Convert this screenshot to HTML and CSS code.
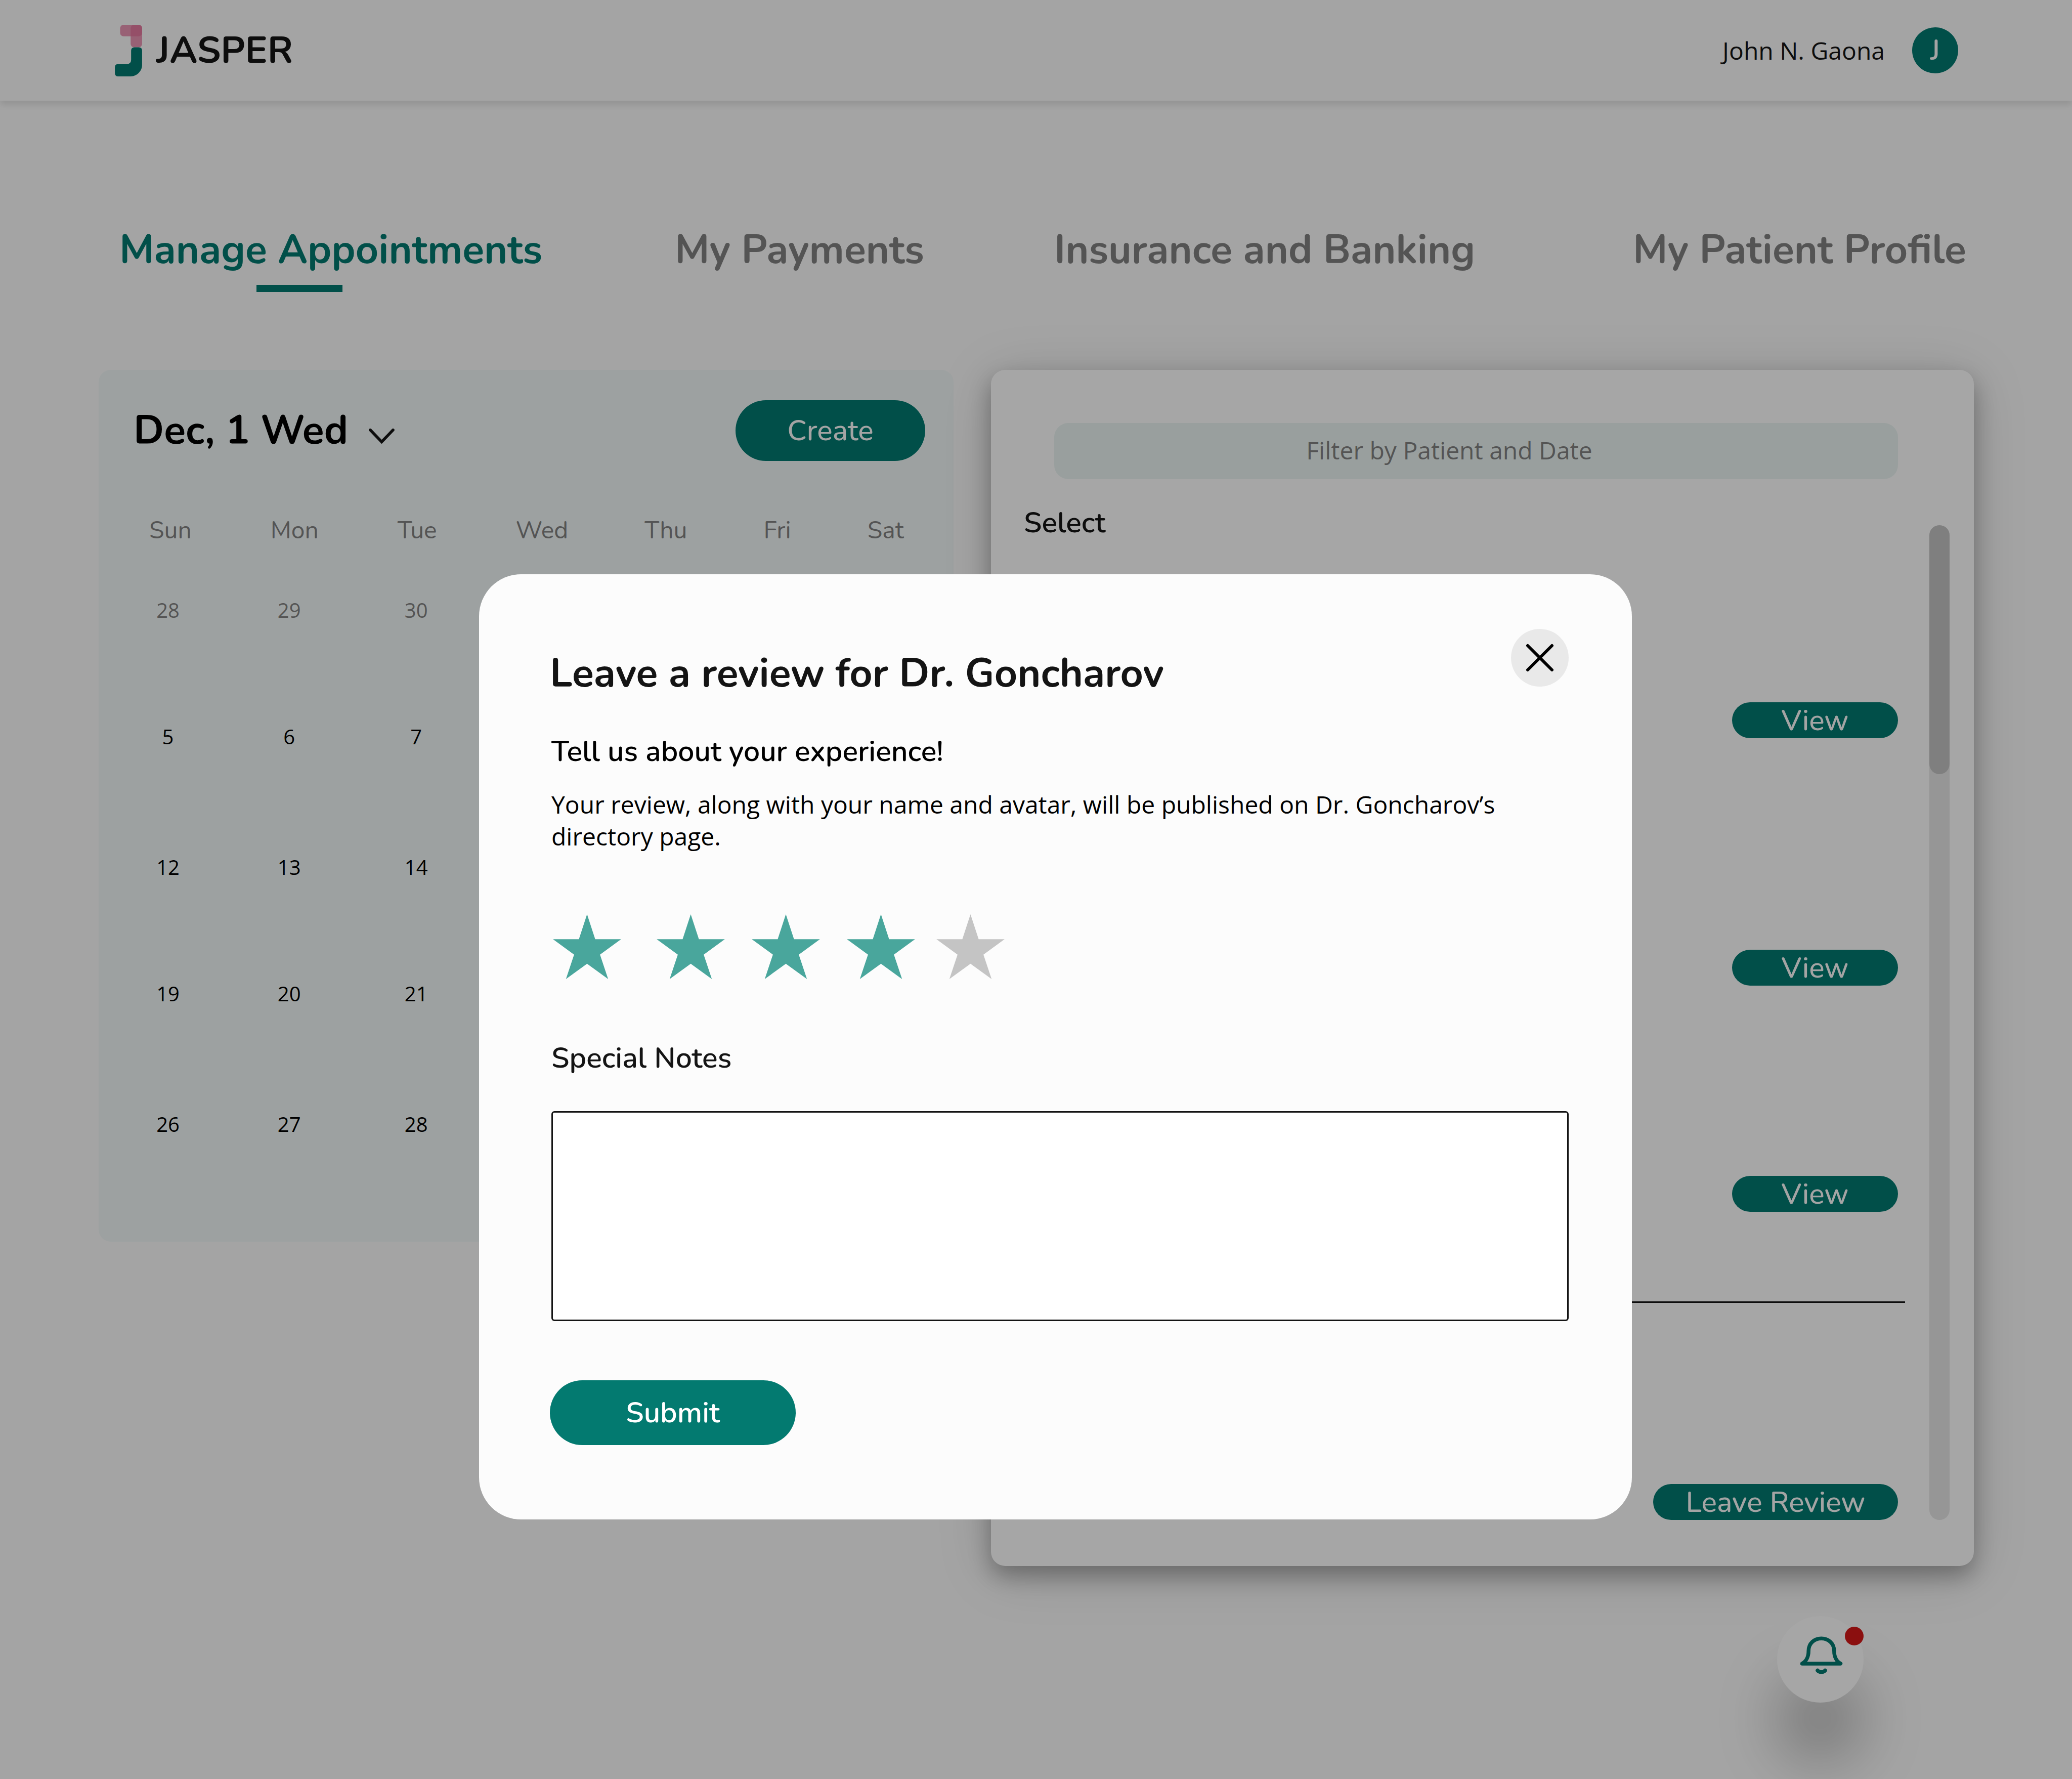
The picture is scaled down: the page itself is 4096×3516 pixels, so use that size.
FILE: index.html
```html
<!DOCTYPE html>
<html lang="en">
<head>
<meta charset="utf-8">
<title>Jasper – Manage Appointments</title>
<link rel="stylesheet" href="styles.css">
</head>
<body>
<div class="page">
  <header class="topbar">
    <a class="brand" href="#">
      <svg class="brand-mark" viewBox="0 0 57 108" aria-hidden="true">
        <rect x="11" y="0" width="46" height="24" rx="7" fill="#e36f98" fill-opacity=".72"/>
        <rect x="33" y="0" width="24" height="47" rx="7" fill="#e36f98" fill-opacity=".72"/>
        <path fill="#037a70" d="M41 47h9q7 0 7 7v30c0 13-11 24-24 24H7q-7 0-7-7V89q0-7 7-7h18q9 0 9-9V54q0-7 7-7z"/>
      </svg>
      <span class="brand-name">JASPER</span>
    </a>
    <div class="account">
      <span class="account-name">John N. Gaona</span>
      <span class="avatar">J</span>
    </div>
  </header>

  <nav class="tabs">
    <a class="tab tab-active" href="#">Manage Appointments</a>
    <a class="tab" href="#">My Payments</a>
    <a class="tab" href="#">Insurance and Banking</a>
    <a class="tab" href="#">My Patient Profile</a>
  </nav>

  <main class="panels">
    <section class="calendar">
      <div class="calendar-head">
        <h2 class="calendar-date">Dec, 1 Wed
          <svg class="chevron" viewBox="0 0 54 32" aria-hidden="true"><path d="M3 3l24 25L51 3"/></svg>
        </h2>
        <button class="btn btn-create" type="button">Create</button>
      </div>
      <table class="month">
        <thead>
          <tr><th>Sun</th><th>Mon</th><th>Tue</th><th>Wed</th><th>Thu</th><th>Fri</th><th>Sat</th></tr>
        </thead>
        <tbody>
          <tr><td class="out"><span>28</span></td><td class="out"><span>29</span></td><td class="out"><span>30</span></td><td></td><td></td><td></td><td></td></tr>
          <tr><td><span>5</span></td><td><span>6</span></td><td><span>7</span></td><td></td><td></td><td></td><td></td></tr>
          <tr><td><span>12</span></td><td><span>13</span></td><td><span>14</span></td><td></td><td></td><td></td><td></td></tr>
          <tr><td><span>19</span></td><td><span>20</span></td><td><span>21</span></td><td></td><td></td><td></td><td></td></tr>
          <tr><td><span>26</span></td><td><span>27</span></td><td><span>28</span></td><td></td><td></td><td></td><td></td></tr>
        </tbody>
      </table>
    </section>

    <section class="visits">
      <input class="filter" type="text" aria-label="Filter by Patient and Date" placeholder="Filter by Patient and Date">
      <div class="visits-body">
        <div class="visits-main">
          <h3 class="select">Select</h3>
          <ul class="visit-list">
            <li class="visit"><button class="btn btn-row" type="button">View</button></li>
            <li class="visit"><button class="btn btn-row" type="button">View</button></li>
            <li class="visit visit-last"><button class="btn btn-row" type="button">View</button></li>
            <li class="visit"><button class="btn btn-row btn-review" type="button">Leave Review</button></li>
          </ul>
        </div>
        <div class="scroll-track"><div class="scroll-thumb"></div></div>
      </div>
    </section>
  </main>

  <button class="alerts" type="button" aria-label="Notifications">
    <svg class="bell" viewBox="0 0 90 80" aria-hidden="true">
      <path d="M18 31C18 15 30 4.500 45 4.500S72 15 72 31C72 43 77 53 85.500 57.500H4.500C13 53 18 43 18 31z"/>
      <path d="M37 72c4 4.500 12 4.500 16 0"/>
    </svg>
    <span class="alerts-dot"></span>
  </button>
</div>

<div class="overlay">
  <form class="dialog" role="dialog" aria-labelledby="dialog-title">
    <div class="dialog-head">
      <h1 class="dialog-title" id="dialog-title">Leave a review for Dr. Goncharov</h1>
      <button class="close" type="button" aria-label="Close">
        <svg class="close-icon" viewBox="0 0 56 56" aria-hidden="true"><path d="M4 4l48 48M52 4L4 52"/></svg>
      </button>
    </div>
    <div class="fields">
      <h2 class="lead">Tell us about your experience!</h2>
      <p class="note">Your review, along with your name and avatar, will be published on Dr. Goncharov’s directory page.</p>
      <fieldset class="stars">
        <label class="star"><input type="radio" name="rating" value="1" aria-label="1 star"><svg viewBox="0 0 142 135" aria-hidden="true"><path d="M71 0l17 52h54L98 84l17 51-44-32-44 32 17-51L0 52h54z"/></svg></label>
        <label class="star"><input type="radio" name="rating" value="2" aria-label="2 stars"><svg viewBox="0 0 142 135" aria-hidden="true"><path d="M71 0l17 52h54L98 84l17 51-44-32-44 32 17-51L0 52h54z"/></svg></label>
        <label class="star"><input type="radio" name="rating" value="3" aria-label="3 stars"><svg viewBox="0 0 142 135" aria-hidden="true"><path d="M71 0l17 52h54L98 84l17 51-44-32-44 32 17-51L0 52h54z"/></svg></label>
        <label class="star"><input type="radio" name="rating" value="4" aria-label="4 stars" checked><svg viewBox="0 0 142 135" aria-hidden="true"><path d="M71 0l17 52h54L98 84l17 51-44-32-44 32 17-51L0 52h54z"/></svg></label>
        <label class="star star-off"><input type="radio" name="rating" value="5" aria-label="5 stars"><svg viewBox="0 0 142 135" aria-hidden="true"><path d="M71 0l17 52h54L98 84l17 51-44-32-44 32 17-51L0 52h54z"/></svg></label>
      </fieldset>
      <label class="notes-label" for="notes">Special Notes</label>
      <textarea class="notes" id="notes"></textarea>
    </div>
    <button class="btn btn-submit" type="submit">Submit</button>
  </form>
</div>
</body>
</html>
```
FILE: styles.css
```css
:root {
  --display: "Nunito", "Lato", sans-serif;
  --text: "Open Sans", "Noto Sans", sans-serif;
  --teal: #037a70;
  --ink: #141414;
  --muted: #828282;
}

* {
  box-sizing: border-box;
}

body,
h1,
h2,
h3,
p,
ul,
fieldset {
  margin: 0;
  padding: 0;
}

body {
  background: #fcfcfc;
  color: var(--ink);
  font-family: var(--display);
}

a {
  color: inherit;
  text-decoration: none;
}

.page {
  position: relative;
  min-height: 100vh;
  overflow: hidden;
}

/* Header */
.topbar {
  display: flex;
  justify-content: space-between;
  align-items: center;
  height: 199px;
  padding: 0 225px 0 227px;
  background: #fcfcfc;
  box-shadow: 0 8px 12px rgba(0, 0, 0, 0.1);
}

.brand,
.account {
  display: flex;
  align-items: center;
}

.brand {
  gap: 28px;
}

.brand-mark {
  width: 54px;
  height: 102px;
}

.brand-name {
  font-size: 74px;
  font-weight: 700;
  line-height: 104px;
}

.account {
  gap: 54px;
}

.account-name {
  font-family: var(--text);
  font-size: 48px;
  line-height: 66px;
}

.avatar {
  width: 91px;
  height: 91px;
  border-radius: 50%;
  background: var(--teal);
  color: #fcfcfc;
  font-size: 57px;
  font-weight: 600;
  line-height: 91px;
  text-align: center;
}

/* Section tabs */
.tabs {
  display: grid;
  grid-template-columns: 1098fr 750fr 1144fr 670fr;
  padding: 240px 198px 0 236px;
}

.tab {
  color: var(--muted);
  font-size: 79px;
  font-weight: 700;
  line-height: 110px;
  white-space: nowrap;
}

.tab-active {
  color: var(--teal);
}

.tab-active::after {
  content: "";
  display: block;
  width: 170px;
  height: 14px;
  margin: 14px 0 0 271px;
  background: var(--teal);
}

.panels {
  display: grid;
  grid-template-columns: 1690fr 1943fr;
  align-items: start;
  gap: 74px;
  padding: 154px 194px 0 195px;
}

.btn {
  border: 0;
  border-radius: 64px;
  background: var(--teal);
  color: #fcfcfc;
  font-family: var(--display);
  font-size: 57px;
  font-weight: 500;
  line-height: 70px;
}

/* Calendar */
.calendar {
  height: 1723px;
  padding: 60px 56px 0 69px;
  border-radius: 24px;
  background: #f2f8f8;
}

.calendar-head {
  display: flex;
  justify-content: space-between;
  align-items: center;
}

.calendar-date {
  display: flex;
  align-items: center;
  gap: 41px;
  color: #000;
  font-size: 79px;
  font-weight: 700;
  line-height: 110px;
}

.chevron {
  width: 51px;
  height: 30px;
  margin-top: 22px;
  fill: none;
  stroke: #141414;
  stroke-width: 6;
  stroke-linecap: round;
}

.btn-create {
  width: 375px;
  height: 120px;
}

.month {
  margin: 104px 0 0 31px;
  border-collapse: collapse;
}

.month th {
  height: 164px;
  padding: 0 156px 0 0;
  color: var(--muted);
  font-size: 48px;
  font-weight: 400;
  line-height: 66px;
  text-align: left;
  vertical-align: top;
}

.month th:nth-child(n+4) {
  padding-right: 151px;
}

.month th:last-child {
  padding-right: 0;
}

.month td {
  height: 250px;
  padding: 0 0 0 13px;
  color: #000;
  font-family: var(--text);
  font-size: 40px;
  line-height: 54px;
  vertical-align: top;
}

.month tr:nth-child(even) td {
  height: 258px;
}

.month td span {
  display: block;
  width: 48px;
  text-align: center;
}

.month .out {
  color: var(--muted);
}

/* Visits */
.visits {
  padding: 105px 48px 91px 65px;
  border-radius: 28px;
  background: #fff;
  box-shadow: 0 20px 44px rgba(0, 0, 0, 0.28), 0 14px 110px rgba(0, 0, 0, 0.16);
}

.filter {
  display: block;
  width: calc(100% - 162px);
  height: 111px;
  margin-left: 60px;
  padding: 0 106px 4px 0;
  border: 0;
  border-radius: 28px;
  background: #ebf5f3;
  font-family: var(--text);
  font-size: 48px;
  text-align: center;
}

.filter::placeholder {
  color: var(--muted);
  opacity: 1;
}

.visits-body {
  display: flex;
  gap: 48px;
}

.visits-main {
  flex: 1;
}

.select {
  margin-top: 47px;
  font-size: 57px;
  font-weight: 600;
  line-height: 78px;
}

.visit-list {
  display: flex;
  flex-direction: column;
  list-style: none;
}

.visit {
  display: flex;
  justify-content: flex-end;
  padding: 0 14px 0 0;
}

.visit:nth-child(1) {
  margin-top: 316px;
}

.visit:nth-child(2) {
  margin-top: 418px;
}

.visit:nth-child(3) {
  margin-top: 376px;
}

.visit:nth-child(4) {
  margin-top: 358px;
}

.visit-last {
  padding-bottom: 177px;
  border-bottom: 3px solid var(--ink);
}

.btn-row {
  width: 328px;
  height: 71px;
  padding: 0;
}

.btn-review {
  width: 484px;
}

.scroll-track {
  width: 40px;
  margin-top: 91px;
  border-radius: 20px;
  background: #e7e7e7;
}

.scroll-thumb {
  height: 492px;
  border-radius: 20px;
  background: #c4c4c4;
}

/* Notification button */
.alerts {
  position: absolute;
  right: 412px;
  bottom: 151px;
  display: flex;
  justify-content: center;
  align-items: center;
  width: 171px;
  height: 171px;
  padding: 0 0 16px 4px;
  border: 0;
  border-radius: 50%;
  background: #fff;
  box-shadow: 0 116px 120px rgba(0, 0, 0, 0.27);
}

.bell {
  width: 85px;
  height: 75px;
  fill: none;
  stroke: var(--teal);
  stroke-width: 8;
  stroke-linecap: round;
  stroke-linejoin: round;
}

.alerts-dot {
  position: absolute;
  top: 21px;
  right: 0;
  width: 37px;
  height: 37px;
  border-radius: 50%;
  background: #d61717;
}

/* Review dialog */
.overlay {
  position: fixed;
  inset: 0;
  display: flex;
  align-items: flex-start;
  padding: 1135px 870px 0 947px;
  background: rgba(0, 0, 0, 0.35);
}

.dialog {
  flex: 1;
  padding: 108px 125px 147px 140px;
  border-radius: 83px;
  background: #fcfcfc;
}

.dialog-head {
  display: flex;
  justify-content: space-between;
  align-items: flex-start;
}

.dialog-title {
  margin-top: 33px;
  font-size: 79px;
  font-weight: 700;
  line-height: 110px;
}

.close {
  display: flex;
  justify-content: center;
  align-items: center;
  width: 114px;
  height: 114px;
  padding: 0;
  border: 0;
  border-radius: 50%;
  background: #e9e9e9;
}

.close-icon {
  width: 56px;
  height: 56px;
  fill: none;
  stroke: #000;
  stroke-width: 6;
  stroke-linecap: round;
}

.fields {
  display: flex;
  flex-direction: column;
  padding: 60px 0 0 3px;
}

.lead {
  color: #000;
  font-size: 57px;
  font-weight: 600;
  line-height: 78px;
}

.note {
  margin-top: 34px;
  color: #000;
  font-family: var(--text);
  font-size: 48px;
  line-height: 63px;
}

.stars {
  display: flex;
  gap: 53px;
  margin: 123px 0 117px 3px;
  border: 0;
}

.star:first-child {
  margin-right: 17px;
}

.star:last-child {
  margin-left: -11px;
}

.star input {
  position: absolute;
  opacity: 0;
}

.star svg {
  display: block;
  width: 135px;
  height: 128px;
  fill: #49a69c;
}

.star-off svg {
  fill: #c4c4c4;
}

.notes-label {
  font-size: 57px;
  font-weight: 600;
  line-height: 78px;
}

.notes {
  height: 415px;
  margin: 66px 0 117px;
  padding: 24px;
  border: 3px solid var(--ink);
  border-radius: 6px;
  background: #fff;
  font-family: var(--text);
  font-size: 48px;
  resize: none;
}

.btn-submit {
  display: block;
  width: 486px;
  height: 128px;
  color: #fff;
  font-weight: 600;
}
```
